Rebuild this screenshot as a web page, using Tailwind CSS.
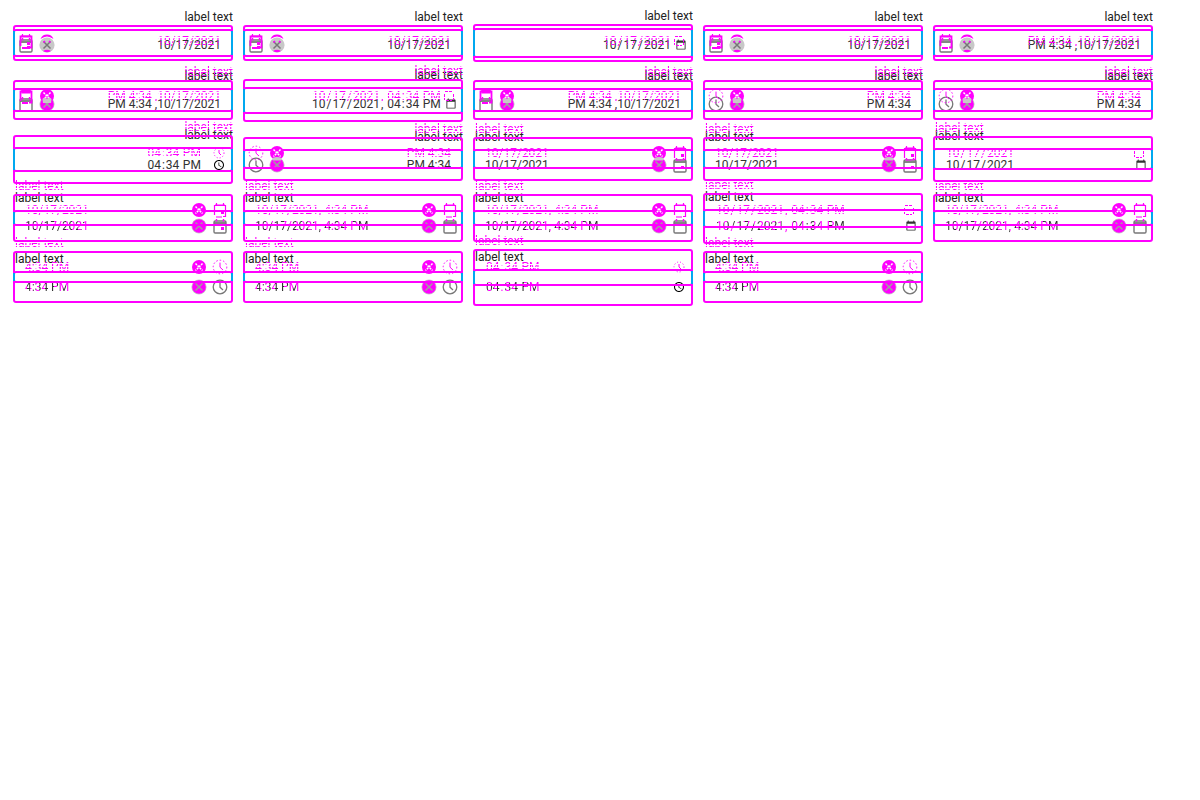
<!DOCTYPE html>
<html lang="en">
<head>
<meta charset="utf-8">
<title>Date and time fields: layout comparison</title>
<script src="https://cdn.jsdelivr.net/npm/@tailwindcss/browser@4"></script>
</head>
<body class="bg-white font-['Roboto','Liberation_Sans',sans-serif] text-xs text-[#222]">
<main class="grid pt-2 pr-[47px] pl-[13px]">
  <section id="current" aria-label="Current fields" class="grid grid-cols-5 grid-rows-[54px_56px_58px_56px_58px] items-center content-start gap-x-2.5 gap-y-1 [grid-area:1/1]"></section>
  <section id="previous" aria-hidden="true" class="pointer-events-none grid grid-cols-5 grid-rows-[50px_52px_54px_52px_54px] items-center content-start gap-x-2.5 gap-y-1 [grid-area:1/1]"></section>
</main>
<script>
const fields = [
  ['rtl','date'],['rtl','date'],['rtl','date',1],['rtl','date'],['rtl','dt'],
  ['rtl','dt'],['rtl','dt',1],['rtl','dt'],['rtl','time'],['rtl','time'],
  ['rtl','time',1],['rtl','time'],['ltr','date'],['ltr','date'],['ltr','date',1],
  ['ltr','date'],['ltr','dt'],['ltr','dt'],['ltr','dt',1],['ltr','dt'],
  ['ltr','time'],['ltr','time'],['ltr','time',1],['ltr','time']
];
const text = {
  ltr: {date:'10/17/2021', dt:'10/17/2021, 4:34 PM', time:'4:34 PM'},
  rtl: {date:'10/17/2021', dt:'PM 4:34 ,10/17/2021', time:'PM 4:34'}
};
const native = {
  date: ['date','2021-10-17','h-[34px]'],
  dt: ['datetime-local','2021-10-17T16:34','h-[35px]'],
  time: ['time','16:34','h-[37px]']
};
// Changed pixels: magenta text with every third pixel row left out
const dots = 'text-[#f0f] [mask-image:repeating-linear-gradient(0deg,#000_0_2px,transparent_2px_3px)]';
// Partly changed text: dark glyphs with magenta stripes
const mixed = 'bg-[repeating-linear-gradient(90deg,#333_0_3px,#f0f_3px_6px)] bg-clip-text text-transparent';

function calendar(day, ghost, row) {
  if (ghost) return `<svg viewBox="0 0 16 16" class="size-4" fill="none" stroke="#f0f" stroke-width="1.2">
    <path d="M2.5 13V3.5H13.5V14.5H11M4 15H10" ${row > 1 ? '' : 'stroke-width="1.8"'}/><path d="M4.5 1V3.5M11.5 1V3.5M3 3H13"/>
    ${row === 1 ? '<path d="M4 2.5H12V5H4Z" fill="#f0f"/>' : ''}
    ${day ? '<rect x="9" y="9" width="3" height="3" fill="#f0f" stroke="none"/>' : ''}</svg>`;
  return `<svg viewBox="0 0 16 16" class="size-4" fill="none" stroke="#777" stroke-width="1.4">
    <rect x="2" y="3" width="12" height="12" rx="1.2"/><path d="M2 5H14" stroke-width="1.8"/><path d="M4.5 1V3.5M11.5 1V3.5" stroke="#f0f"/>
    ${day ? '<rect x="9" y="9" width="3" height="3" fill="#f0f" stroke="none"/>' : ''}</svg>`;
}
function clock(ghost) {
  return `<svg viewBox="0 0 16 16" class="size-4" fill="none" stroke="${ghost ? '#f0f' : '#777'}" stroke-width="${ghost ? 1 : 1.3}">
    <circle cx="8" cy="8" r="6.8" ${ghost ? 'stroke-dasharray="1.5 2"' : ''}/><path d="M8 3.6V8.2L11 11"/></svg>`;
}
function clear(row, ghost) {
  const cross = 'M4.5 4.5L11.5 11.5M11.5 4.5L4.5 11.5';
  if (ghost) {
    if (!row) return `<svg viewBox="0 0 16 16" class="size-4"><path d="M1.5 6A7 7 0 0 1 14.5 6Q11 3.5 8 3.5T1.5 6Z" fill="#f0f"/><path d="M4.5 9.5L6 8M10 8L11.5 9.5" stroke="#f0f" stroke-width="1.5"/></svg>`;
    return `<svg viewBox="0 0 16 16" class="size-4"><circle cx="8" cy="8" r="7" fill="#f0f"/><path d="${cross}" stroke="#fff" stroke-width="1.5" stroke-dasharray="2 1"/>
      ${row === 1 ? '<path d="M3.5 11Q6 8 8 11Q10 8 12.5 11L12 15H4Z" fill="#c8c8c8"/>' : ''}${row === 2 ? '<path d="M3.5 13Q8 11 12.5 13L12 15.5H4Z" fill="#c8c8c8"/>' : ''}</svg>`;
  }
  return `<svg viewBox="0 0 16 16" class="size-4"><circle cx="8" cy="8" r="7.6" fill="#c8c8c8"/>
    ${row ? '<circle cx="8" cy="8" r="6.8" fill="#f0f"/>' : '<path d="M4 14Q8 11.5 12 14Q8 16.5 4 14Z" fill="#f0f"/>'}
    <path d="${cross}" stroke="${row ? '#a0a0a0' : '#777'}" stroke-width="1.5"/></svg>`;
}
function smallIcon(kind) {
  const shape = kind === 'time'
    ? '<circle cx="6" cy="6" r="5" stroke-dasharray="1 2"/><path d="M6 3V6L8 8"/>'
    : '<path d="M2 1.5H10M1.5 4V10M10.5 4V10M3 10.5H9" stroke-dasharray="3 1"/>';
  return `<svg viewBox="0 0 12 12" class="absolute right-1.5 size-3" fill="none" stroke="#f0f">${shape}</svg>`;
}
function cell([dir, kind, isNative], i, ghost) {
  const row = Math.floor(i / 5), rtl = dir === 'rtl';
  const shift = 4 * (row + 1);
  const labelClass = `block h-4 leading-4 ${rtl ? 'text-right' : 'pl-0.5 text-left'}`;
  const label = ghost
    ? `<div class="${labelClass} ${dots}">${row ? 'label text' : ''}</div>`
    : `<label for="field-${i}" class="${labelClass} mb-1">label text</label>`;
  const [type, value, height] = isNative ? native[kind] : ['text', text[dir][kind], 'h-8'];
  const color = ghost ? dots : row > 2 ? mixed : 'text-[#333]';
  const id = ghost ? 'tabindex="-1"' : `id="field-${i}"`;
  let inner;
  if (isNative) {
    const picker = (ghost ? '[&::-webkit-calendar-picker-indicator]:opacity-0 ' : kind === 'time' ? '' : '[&::-webkit-calendar-picker-indicator]:opacity-80 ')
      + (rtl && kind !== 'time' ? '[&::-webkit-calendar-picker-indicator]:-ml-5' : '');
    inner = `<input ${id} type="${type}" value="${value}" class="outline-none ${rtl ? 'ml-auto' : 'w-full'} ${color} ${picker}">${ghost ? smallIcon(kind) : ''}`;
  } else {
    const box = ghost ? 'span' : 'button';
    const attr = n => ghost ? '' : `type="button" aria-label="${n}"`;
    inner = `<input ${id} type="text" value="${value}" class="min-w-0 flex-1 px-2.5 outline-none ${rtl ? 'text-right' : ''} ${color}">
      <${box} ${attr('Clear')} class="shrink-0">${clear(row, ghost)}</${box}>
      <${box} ${attr('Open picker')} class="shrink-0">${kind === 'time' ? clock(ghost) : calendar(kind === 'date', ghost, row)}</${box}>`;
  }
  const layout = isNative ? 'pr-0.5 pl-2.5' : rtl ? 'flex-row-reverse gap-[5px] pl-[3px]' : 'gap-[5px] pr-[3px]';
  // Stretch of the side borders that both layers share
  const overlap = ghost ? `<span class="absolute -inset-x-0.5 bottom-0 border-x-2 border-[#00a8f0]" style="height:calc(100% - ${shift}px)"></span>` : '';
  return `<div>${label}<div class="relative flex items-center rounded-[3px] border-2 border-[#f0f] ${height} ${layout}">${overlap}${inner}</div></div>`;
}
document.getElementById('current').innerHTML = fields.map((f, i) => cell(f, i, false)).join('');
document.getElementById('previous').innerHTML = fields.map((f, i) => cell(f, i, true)).join('');
</script>
</body>
</html>
